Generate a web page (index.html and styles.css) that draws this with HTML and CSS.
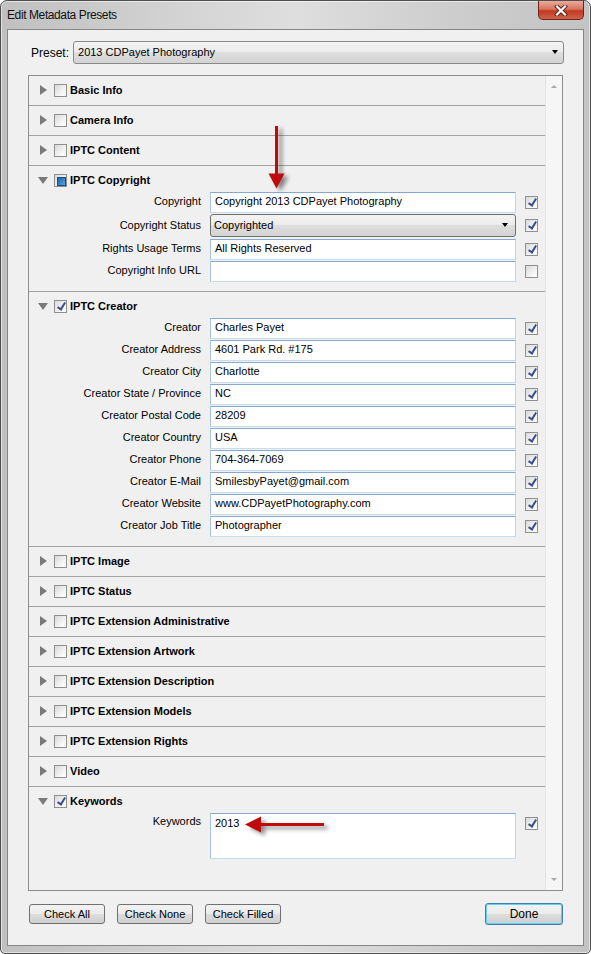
FILE: index.html
```html
<!DOCTYPE html>
<html lang="en">
<head>
    <meta charset="UTF-8">
    <title>Edit Metadata Presets</title>
    <link rel="stylesheet" href="styles.css">
</head>
<body>
<div class="window">
    <div class="titlebar">
        <span class="title">Edit Metadata Presets</span>
        <div class="close">
            <svg width="14" height="11" viewBox="0 0 14 11">
                <path d="M3 1.5 L11 9.5 M11 1.5 L3 9.5" stroke="#5b1d12" stroke-width="4" stroke-linecap="square"/>
                <path d="M3 1.5 L11 9.5 M11 1.5 L3 9.5" stroke="#fff" stroke-width="2.2" stroke-linecap="square"/>
            </svg>
        </div>
    </div>

    <div class="client">
        <div class="preset-row">
            <span class="preset-label">Preset:</span>
            <div class="dropdown">2013 CDPayet Photography<span class="arrow"></span></div>
        </div>

        <div class="panel">
            <div class="list">
                <div class="sec">
                    <div class="head"><span class="tri right"></span><span class="cb"></span>Basic Info</div>
                </div>
                <div class="sec">
                    <div class="head"><span class="tri right"></span><span class="cb"></span>Camera Info</div>
                </div>
                <div class="sec">
                    <div class="head"><span class="tri right"></span><span class="cb"></span>IPTC Content</div>
                </div>

                <div class="sec open">
                    <div class="head"><span class="tri down"></span><span class="cb mixed"></span>IPTC Copyright</div>
                    <div class="fields">
                        <div class="row"><label>Copyright</label><div class="in">Copyright 2013 CDPayet Photography</div><span class="cb on"></span></div>
                        <div class="row tall"><label>Copyright Status</label><div class="fsel">Copyrighted<span class="arrow"></span></div><span class="cb on"></span></div>
                        <div class="row"><label>Rights Usage Terms</label><div class="in">All Rights Reserved</div><span class="cb on"></span></div>
                        <div class="row"><label>Copyright Info URL</label><div class="in"></div><span class="cb"></span></div>
                    </div>
                </div>

                <div class="sec open">
                    <div class="head"><span class="tri down"></span><span class="cb on"></span>IPTC Creator</div>
                    <div class="fields">
                        <div class="row"><label>Creator</label><div class="in">Charles Payet</div><span class="cb on"></span></div>
                        <div class="row"><label>Creator Address</label><div class="in">4601 Park Rd. #175</div><span class="cb on"></span></div>
                        <div class="row"><label>Creator City</label><div class="in">Charlotte</div><span class="cb on"></span></div>
                        <div class="row"><label>Creator State / Province</label><div class="in">NC</div><span class="cb on"></span></div>
                        <div class="row"><label>Creator Postal Code</label><div class="in">28209</div><span class="cb on"></span></div>
                        <div class="row"><label>Creator Country</label><div class="in">USA</div><span class="cb on"></span></div>
                        <div class="row"><label>Creator Phone</label><div class="in">704-364-7069</div><span class="cb on"></span></div>
                        <div class="row"><label>Creator E-Mail</label><div class="in">SmilesbyPayet@gmail.com</div><span class="cb on"></span></div>
                        <div class="row"><label>Creator Website</label><div class="in">www.CDPayetPhotography.com</div><span class="cb on"></span></div>
                        <div class="row"><label>Creator Job Title</label><div class="in">Photographer</div><span class="cb on"></span></div>
                    </div>
                </div>

                <div class="sec">
                    <div class="head"><span class="tri right"></span><span class="cb"></span>IPTC Image</div>
                </div>
                <div class="sec">
                    <div class="head"><span class="tri right"></span><span class="cb"></span>IPTC Status</div>
                </div>
                <div class="sec">
                    <div class="head"><span class="tri right"></span><span class="cb"></span>IPTC Extension Administrative</div>
                </div>
                <div class="sec">
                    <div class="head"><span class="tri right"></span><span class="cb"></span>IPTC Extension Artwork</div>
                </div>
                <div class="sec">
                    <div class="head"><span class="tri right"></span><span class="cb"></span>IPTC Extension Description</div>
                </div>
                <div class="sec">
                    <div class="head"><span class="tri right"></span><span class="cb"></span>IPTC Extension Models</div>
                </div>
                <div class="sec">
                    <div class="head"><span class="tri right"></span><span class="cb"></span>IPTC Extension Rights</div>
                </div>
                <div class="sec">
                    <div class="head"><span class="tri right"></span><span class="cb"></span>Video</div>
                </div>

                <div class="sec open last">
                    <div class="head"><span class="tri down"></span><span class="cb on"></span>Keywords</div>
                    <div class="fields">
                        <div class="row area"><label>Keywords</label><div class="in textarea">2013</div><span class="cb on"></span></div>
                    </div>
                </div>
            </div>
            <div class="scrollbar"><span class="sb-up"></span><span class="sb-down"></span></div>
        </div>

        <div class="buttons">
            <div class="btn">Check All</div>
            <div class="btn">Check None</div>
            <div class="btn">Check Filled</div>
            <div class="btn done">Done</div>
        </div>
    </div>

    <!-- red callout arrows drawn over the dialog -->
    <svg class="callout down-arrow" width="40" height="80" viewBox="0 0 40 80">
        <rect x="12" y="5" width="3" height="49" fill="#bf0b0b"/>
        <polygon points="5.5,52.5 21.5,52.5 13.5,67.5" fill="#bf0b0b"/>
    </svg>
    <svg class="callout left-arrow" width="95" height="30" viewBox="0 0 95 30">
        <polygon points="4,13.5 20,5.5 20,21.5" fill="#bf0b0b"/>
        <rect x="19" y="12" width="64" height="3" fill="#bf0b0b"/>
    </svg>
</div>
</body>
</html>
```

FILE: styles.css
```css
*{
    margin: 0;
    padding: 0;
    box-sizing: border-box;
}

body{
    background: #fff;
    font-family: "Liberation Sans", Arial, sans-serif;
    font-size: 11px;
    color: #000;
}

.window{
    position: relative;
    width: 591px;
    height: 954px;
    border: 1px solid #4f4f4f;
    border-radius: 7px 7px 5px 5px;
    background: linear-gradient(90deg, #c0c0c0, #d3d3d3 30%, #dedede 50%, #cecece 75%, #c3c3c3);
    box-shadow: inset 0 0 0 1px rgba(255,255,255,.55);
    padding: 0 6px 7px 6px;
    display: flex;
    flex-direction: column;
}

/* title bar */
.titlebar{
    height: 28px;
    display: flex;
    align-items: flex-start;
}
.title{
    padding-top: 7px;
    font-size: 12px;
    letter-spacing: -0.4px;
    color: #111;
}
.close{
    margin-left: auto;
    width: 46px;
    height: 19px;
    border: 1px solid #6c2418;
    border-top: none;
    border-radius: 0 0 5px 5px;
    background: linear-gradient(#e9ab9c, #d7735f 45%, #c23a21 55%, #d0604a);
    display: flex;
    align-items: center;
    justify-content: center;
}

.client{
    flex: 1;
    background: #f0f0f0;
    border: 1px solid #868686;
    display: flex;
    flex-direction: column;
}

/* preset */
.preset-row{
    display: flex;
    align-items: center;
    padding: 11px 19px 0 23px;
}
.preset-label{
    font-size: 12px;
    margin-right: 4px;
}
.dropdown, .fsel{
    height: 23px;
    border: 1px solid #8a8a8a;
    border-radius: 3px;
    background: linear-gradient(#f3f3f3, #ececec 50%, #dedede 50%, #d3d3d3);
    display: flex;
    align-items: center;
    padding: 0 0 1px 4px;
}
.dropdown{
    flex: 1;
}
.arrow{
    margin-left: auto;
    margin-right: 5px;
    border-left: 3.5px solid transparent;
    border-right: 3.5px solid transparent;
    border-top: 4px solid #000;
}

/* list panel */
.panel{
    margin: 11px 20px 0 20px;
    height: 816px;
    border: 1px solid #8d8d8d;
    display: flex;
}
.list{
    flex: 1;
}
.scrollbar{
    width: 17px;
    border-left: 1px solid #e2e2e2;
    background: #f6f6f6;
    display: flex;
    flex-direction: column;
    justify-content: space-between;
    align-items: center;
    padding: 9px 0 9px 0;
}
.sb-up{
    border-left: 3.5px solid transparent;
    border-right: 3.5px solid transparent;
    border-bottom: 3px solid #a8a8a8;
}
.sb-down{
    border-left: 3.5px solid transparent;
    border-right: 3.5px solid transparent;
    border-top: 3px solid #a8a8a8;
}

.sec{
    border-bottom: 1px solid #a3a3a3;
}
.sec.last{
    border-bottom: none;
}
.head{
    height: 29px;
    display: flex;
    align-items: center;
    padding: 0 0 1px 8px;
    font-weight: bold;
}
.sec.open .head{
    margin-bottom: -4px;
}

.tri{
    width: 12px;
    height: 10px;
    margin-right: 5px;
    display: flex;
    align-items: center;
    justify-content: center;
}
.tri.right::before{
    content: '';
    border-top: 5px solid transparent;
    border-bottom: 5px solid transparent;
    border-left: 7px solid #7a7a7a;
}
.tri.down::before{
    content: '';
    border-left: 5px solid transparent;
    border-right: 5px solid transparent;
    border-top: 7px solid #7a7a7a;
}

/* checkboxes */
.cb{
    position: relative;
    flex: none;
    width: 13px;
    height: 13px;
    border: 1px solid #8e8f8f;
    background: linear-gradient(135deg, #d9d9d9, #f7f7f7 70%, #fff);
    margin-right: 3px;
}
.cb.on::after{
    content: '';
    position: absolute;
    left: 4px;
    top: 0px;
    width: 3px;
    height: 7px;
    border: solid #3b4f8f;
    border-width: 0 2px 2px 0;
    transform: rotate(32deg);
}
.cb.mixed::after{
    content: '';
    position: absolute;
    left: 2px;
    top: 2px;
    width: 7px;
    height: 7px;
    border: 1px solid #1b4d80;
    background: linear-gradient(135deg, #1e62a6, #4ea7e3);
}

/* field rows */
.fields{
    padding-bottom: 9px;
}
.row{
    display: grid;
    grid-template-columns: 172px 306px 13px;
    column-gap: 9px;
    align-items: center;
    height: 22px;
}
.row.tall{
    height: 25px;
}
.row label{
    text-align: right;
    white-space: nowrap;
    padding-bottom: 2px;
}
.row .cb{
    margin-right: 0;
}
.in{
    height: 21px;
    border: 1px solid;
    border-color: #86a9d2 #bcd5ee #c6dcf1 #a7c3e2;
    background: #fff;
    padding: 0 4px;
    line-height: 17px;
    white-space: nowrap;
    overflow: hidden;
}
.fsel{
    border-color: #6f6f6f;
    padding-left: 3px;
}
.fsel .arrow{
    margin-right: 7px;
}

.row.area{
    height: 47px;
    align-items: start;
    padding-top: 1px;
}
.row.area label{
    padding-top: 2px;
}
.row.area .cb{
    margin-top: 4px;
}
.textarea{
    height: 46px;
    line-height: 16px;
    padding-top: 1px;
}

/* bottom buttons */
.buttons{
    display: flex;
    align-items: center;
    height: 22px;
    margin-top: 12px;
    padding: 0 20px 0 21px;
    gap: 12px;
}
.btn{
    width: 76px;
    height: 20px;
    border: 1px solid #707070;
    border-radius: 3px;
    background: linear-gradient(#f3f3f3, #ebebeb 50%, #dddddd 50%, #cfcfcf);
    display: flex;
    align-items: center;
    justify-content: center;
    padding-bottom: 1px;
}
.btn.done{
    margin-left: auto;
    width: 78px;
    height: 22px;
    font-size: 12px;
    border-color: #3c7fb1;
    box-shadow: inset 0 0 0 1px #5fd0f5;
}

/* callouts */
.callout{
    position: absolute;
    filter: drop-shadow(4px 3px 2px rgba(0,0,0,.45));
}
.down-arrow{
    left: 262px;
    top: 120px;
}
.left-arrow{
    left: 240px;
    top: 810px;
}
```
